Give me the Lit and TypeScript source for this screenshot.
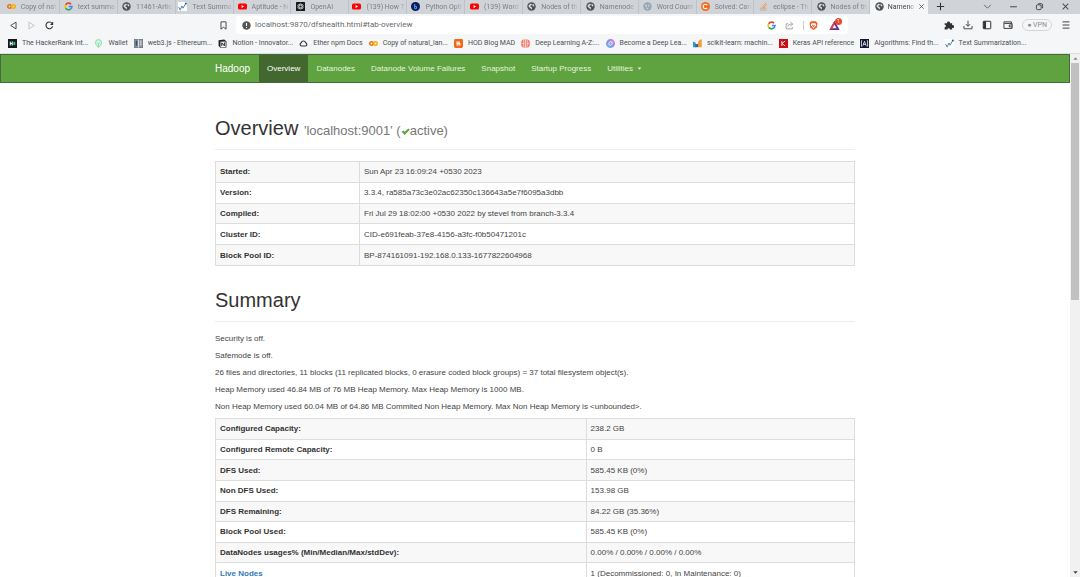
import { LitElement, html, css, svg, nothing, TemplateResult } from "lit";
import { customElement, property } from "lit/decorators.js";

const globe = svg`<circle cx="8" cy="8" r="7.500" fill="#4d5156"/><path d="M2.500 6.500l3.200-3.600 3 .8-.6 2.200-2.200.9.4 1.800 2.400.6.2 2.200-1.600 2.500-1-2.800-2.600-1.600zM10.500 3l2.700 2.600-.6 2.400-2.300-.9-.8-2z" fill="#d9dce0"/>`;
const google = svg`<g fill="none" stroke-width="3"><path d="M12.600 4A6 6 0 0 0 3 5" stroke="#ea4335"/><path d="M3 5a6 6 0 0 0 0 6" stroke="#fbbc05"/><path d="M3 11a6 6 0 0 0 9 1.400" stroke="#34a853"/><path d="M12 12.400A6 6 0 0 0 14 8H8.500" stroke="#4285f4"/></g>`;
const youtube = svg`<rect y="2.500" width="16" height="11" rx="3" fill="#f00"/><path d="M6.300 5.300v5.400L11 8z" fill="#fff"/>`;
const colab = svg`<g fill="none" stroke-width="2.600"><circle cx="4.500" cy="8" r="3.200" stroke="#e8710a"/><circle cx="11.500" cy="8" r="3.200" stroke="#f9ab00"/></g>`;
const chart = svg`<path d="M1 9l3 5 3-7 2 4 5-9" fill="none" stroke="#3c78a8" stroke-width="1.600"/><circle cx="14" cy="2.500" r="1.800" fill="#285f9c"/><circle cx="4" cy="13.500" r="1.500" fill="#64b1a0"/>`;

const icons: Record<string, TemplateResult> = {
  globe, google, youtube, colab, chart,
  chartTile: svg`<rect width="16" height="16" fill="#fff"/>${chart}`,
  openai: svg`<rect width="16" height="16" rx="1" fill="#16181a"/><g fill="none" stroke="#d7d9db" stroke-width="1.100"><ellipse cx="8" cy="8" rx="2.500" ry="5.500"/><ellipse cx="8" cy="8" rx="2.500" ry="5.500" transform="rotate(60 8 8)"/><ellipse cx="8" cy="8" rx="2.500" ry="5.500" transform="rotate(120 8 8)"/></g>`,
  python: svg`<circle cx="8" cy="8" r="8" fill="#0c1c5c"/><path d="M6.500 3.500v8.500M6.500 8a2.200 2.200 0 1 1 0 3.500" fill="none" stroke="#4ba2f0" stroke-width="1.800"/>`,
  faded: svg`<circle cx="8" cy="8" r="7.500" fill="#98a5b8"/><path d="M4 5h3v3H4zM9 4l3 2-2 3zM5 10l5 0-2 3z" fill="#d2d9e4"/>`,
  solved: svg`<circle cx="8" cy="8" r="8" fill="#f26b1d"/><path d="M11 5.500a4 4 0 1 0 0 5" fill="none" stroke="#fff" stroke-width="2.200"/>`,
  stack: svg`<path d="M2.500 10v4.500h10V10" fill="none" stroke="#b5b0ac" stroke-width="1.500"/><path d="M4.500 12h6M4.700 9.300l6 1M6 6.200l5.400 2.700M8.400 3l4.200 4.300M11.500 1l2.200 5" stroke="#f2955a" stroke-width="1.700"/>`,
  hacker: svg`<rect width="16" height="16" fill="#101820"/><path d="M4 4.500v7M7.500 4.500v7M4 8h3.500" stroke="#fff" stroke-width="1.800"/><path d="M9.500 5h3.500v6H9.500z" fill="#2ec866"/>`,
  wallet: svg`<path d="M8 1a5.500 5.500 0 0 1 5.500 5.500C13.500 10 8 15 8 15S2.500 10 2.500 6.500A5.500 5.500 0 0 1 8 1z" fill="#d8f6e3" stroke="#6ed79b" stroke-width="1.400"/><path d="M5.500 6L8 8.500 10.500 6M8 8.500V14" stroke="#6ed79b" fill="none" stroke-width="1.300"/>`,
  web3: svg`<rect x=".5" y=".5" width="15" height="15" fill="#8a949e" stroke="#58636e"/><path d="M8 1v14M10.500 4h3M10.500 7h3M10.500 10h3" stroke="#fff" stroke-width="1.300"/><path d="M3 3h3v9H3z" fill="#38506a"/>`,
  notion: svg`<path d="M1 2l10-1 4 3v11l-11 .5L1 12z" fill="#222"/><path d="M4.500 5l9-.6V14l-9 .5z" fill="#fff"/><path d="M6.700 12.500V6.800l4.600 5.400V6" fill="none" stroke="#111" stroke-width="1.600"/>`,
  ether: svg`<path d="M4.500 12.500a3 3 0 0 1-.5-5.800 4 4 0 0 1 7.800 0 3 3 0 0 1-.3 5.800z" fill="none" stroke="#333" stroke-width="2"/>`,
  blogger: svg`<rect width="16" height="16" rx="2.500" fill="#f06a1d"/><path d="M5 4h3.500a2 2 0 0 1 2 2v.8L12 8v2a2 2 0 0 1-2 2H6a2 2 0 0 1-2-2V5a1 1 0 0 1 1-1zM6 6.700h2.500M6 9.700h4" fill="#fff" stroke="#f06a1d"/>`,
  brain: svg`<rect x=".5" y="1" width="15" height="14" rx="5" fill="#ef7a68"/><path d="M5 2v12M8 1v14M11 2v12M2 8h3M11 8h3" stroke="#fff" stroke-width="1.100"/>`,
  swirl: svg`<circle cx="8" cy="8" r="7.800" fill="#8f8bea"/><path d="M8 .2A7.800 7.800 0 0 1 15.800 8H8z" fill="#d589e4"/><path d="M8 15.800A7.800 7.800 0 0 1 .2 8H8z" fill="#69b6ee"/><circle cx="8" cy="8" r="3" fill="none" stroke="#fff" stroke-width="1.500"/>`,
  scikit: svg`<path d="M0 5c4-1 6 3 6 9.500H0z" fill="#3499cd"/><path d="M9 14.500C7.500 7 10 1 15.500.5v14z" fill="#f89939"/><path d="M4 9h5v5.500H4z" fill="#286a91"/>`,
  keras: svg`<rect width="16" height="16" fill="#c70e14"/><path d="M5 3.500v9M11 3.500L5.500 8l5.500 4.500" fill="none" stroke="#fff" stroke-width="1.500"/>`,
  algo: svg`<rect width="16" height="16" fill="#101632"/><path d="M4 3H2.500v10H4M12 3h1.500v10H12M5 12l3-8 3 8M6 9.500h4" fill="none" stroke="#fff" stroke-width="1.400"/>`,
  back: svg`<path d="M12.500 2v12L3 8z" fill="none" stroke="#444" stroke-width="1.700" stroke-linejoin="round"/>`,
  forward: svg`<path d="M3.500 2v12L13 8z" fill="none" stroke="#bbb" stroke-width="1.500" stroke-linejoin="round"/>`,
  reload: svg`<path d="M13.500 9.500A6 6 0 1 1 12.500 4" fill="none" stroke="#333" stroke-width="2"/><path d="M14.500 1v6H9z" fill="#333"/>`,
  ribbon: svg`<path d="M3.500 1.500h9v13L8 11l-4.500 3.500z" fill="none" stroke="#444" stroke-width="1.700" stroke-linejoin="round"/>`,
  info: svg`<circle cx="8" cy="8" r="7.500" fill="#555"/><path d="M8 3.500v5.500M8 10.500v2" stroke="#fff" stroke-width="2"/>`,
  share: svg`<path d="M6 5H2v9h11v-3.500M5 10c.5-3 3-4.500 7-4.500M9.500 2L14 5.500 9.500 9" fill="none" stroke="#888" stroke-width="1.300"/>`,
  shield: svg`<path d="M4 .5h8l3 3-1 8L8 16l-6-4.500-1-8z" fill="#f15a22"/><path d="M4 4.500l4-1 4 1 .5 3L8 13.500 3.500 7.500z" fill="#fff"/><path d="M5.500 6.500L8 8l2.500-1.500V8L8 11 5.500 8z" fill="#f15a22"/>`,
  rewards: svg`<path d="M8 1L.5 14.500h15z" fill="#662d91"/><path d="M8 1L.5 14.500 8 11z" fill="#e0403c"/><path d="M8 6.500L5 12h6z" fill="#fff"/>`,
  puzzle: svg`<path d="M1 5h4a2.300 2.300 0 1 1 4.500 0H13v3.500a2.300 2.300 0 1 1 0 4V15H9.500a2 2 0 1 0-4 0H1v-3.500a2 2 0 1 0 0-4z" fill="#333"/>`,
  download: svg`<path d="M8 1v9M4.500 6.500L8 10l3.500-3.500M1.500 9.500v4.500h13V9.500" fill="none" stroke="#444" stroke-width="1.500"/>`,
  sidebar: svg`<rect x="2" y="2" width="12" height="12" rx="1" fill="none" stroke="#333" stroke-width="1.600"/><path d="M2 2h4.500v12H2z" fill="#333"/>`,
  purse: svg`<path d="M13.500 5.500V3h-12v10.500h13v-8H2M15 8h-5v3h5" fill="none" stroke="#444" stroke-width="1.600"/>`,
  menu: svg`<path d="M2.500 3h11M2.500 8h11M2.500 13h11" stroke="#444" stroke-width="1.600"/>`,
  close: svg`<path d="M3 3l10 10M13 3L3 13" stroke="currentColor" stroke-width="1.800"/>`,
  plus: svg`<path d="M8 1.500v13M1.500 8h13" stroke="#333" stroke-width="1.900"/>`,
  chevron: svg`<path d="M2 5l6 6 6-6" fill="none" stroke="#555" stroke-width="1.500"/>`,
  minimise: svg`<path d="M2 8.500h12" stroke="#333" stroke-width="1.600"/>`,
  restore: svg`<rect x="2.500" y="5" width="8.500" height="8.500" rx="2" fill="none" stroke="#333" stroke-width="1.500"/><path d="M5.500 3h5.500a2.500 2.500 0 0 1 2.500 2.500V11" fill="none" stroke="#333" stroke-width="1.500"/>`,
  check: svg`<path d="M1 8.500L4 6l2.500 2.500L13 2.500l2.500 2.300L6.500 14z" fill="#5fa341"/>`,
  up: svg`<path d="M3 11l5-6 5 6z" fill="#888"/>`,
  down: svg`<path d="M3 5l5 6 5-6z" fill="#444"/>`,
  caret: svg`<path d="M2 5h12L8 12z" fill="currentColor"/>`,
};

@customElement("ui-icon")
class UiIcon extends LitElement {
  @property() name = "";
  static styles = css`
    :host { display: inline-flex; flex: none; width: 9px; height: 9px; }
    svg { width: 100%; height: 100%; display: block; }
  `;
  render() {
    return html`<svg viewBox="0 0 16 16" aria-hidden="true">${icons[this.name]}</svg>`;
  }
}

const tabs: [string, string][] = [
  ["colab", "Copy of nat"], ["google", "text summa"], ["globe", "11461-Artic"],
  ["chartTile", "Text Summa"], ["youtube", "Aptitude - N"], ["openai", "OpenAI"],
  ["youtube", "(139) How T"], ["python", "Python Opti"], ["youtube", "(139) Word"],
  ["globe", "Nodes of th"], ["globe", "Namenode"], ["faded", "Word Count"],
  ["solved", "Solved: Can"], ["stack", "eclipse - Th"], ["globe", "Nodes of th"],
  ["globe", "Nameno"],
];

const bookmarks: [string, string][] = [
  ["hacker", "The HackerRank Int..."], ["wallet", "Wallet"], ["web3", "web3.js - Ethereum..."],
  ["notion", "Notion - Innovator..."], ["ether", "Ether npm Docs"], ["colab", "Copy of natural_lan..."],
  ["blogger", "HOD Blog MAD"], ["brain", "Deep Learning A-Z:..."], ["swirl", "Become a Deep Lea..."],
  ["scikit", "scikit-learn: machin..."], ["keras", "Keras API reference"],
  ["algo", "Algorithms: Find th..."], ["chartTile", "Text Summarization..."],
];

@customElement("browser-chrome")
class BrowserChrome extends LitElement {
  static styles = css`
    :host { display: block; flex: none; font: 7px/10px Roboto, "Noto Sans", sans-serif; color: #4c4f54; }
    * { box-sizing: border-box; }
    button { display: inline-flex; align-items: center; justify-content: center; padding: 0; border: 0; background: none; font: inherit; color: inherit; }
    .strip { display: flex; align-items: center; height: 14px; padding-left: 2px; background: #d0d4d9; }
    .tabs { display: grid; grid-template-columns: repeat(16, minmax(0, 1fr)); flex: 0 1 926px; min-width: 0; height: 14px; }
    .tab { display: flex; align-items: center; gap: 5px; padding: 0 3px 1px 5px; min-width: 0; color: #7c8086; border-right: 1px solid #bfc3c9; }
    .title { flex: 1; white-space: nowrap; text-align: left; mask-image: linear-gradient(90deg, #000 80%, #0003); }
    .active { background: #f5f6f7; color: #44474c; border: 0; gap: 4px; }
    .active .close { width: 7px; height: 7px; }
    .controls { display: flex; flex: 1; align-items: center; padding: 0 10px 1px 8px; gap: 17px; }
    .controls .spread { margin-left: auto; }
    .toolbar { display: flex; align-items: center; height: 22px; padding: 0 9px; background: #f5f6f7; }
    .nav { display: flex; gap: 9px; width: 210px; }
    .address { display: flex; align-items: center; flex: 1; min-width: 0; height: 18px; margin-left: 8px; padding: 0 8px 0 6px; gap: 4px; background: #fff; border-radius: 3px; }
    .url { flex: 1; min-width: 0; padding: 0; border: 0; outline: 0; font: inherit; font-size: 8px; color: #66696d; background: none; }
    .tail { display: flex; align-items: center; gap: 9px; }
    .shields { display: flex; align-items: center; gap: 5px; }
    .line { width: 1px; height: 9px; background: #ccc; }
    .rewards { position: relative; margin-left: 2px; }
    .rewards ui-icon { width: 11px; height: 11px; }
    .count { position: absolute; top: -2px; right: -2px; width: 7px; height: 7px; border-radius: 4px; background: #e8452c; color: #fff; font-size: 5px; line-height: 7px; }
    .tools { display: flex; align-items: center; justify-content: flex-end; gap: 9px; width: 223px; }
    .tools ui-icon { width: 10px; height: 10px; }
    .vpn { height: 12px; padding: 0 4px; border: 1px solid #d4d6d9; border-radius: 6px; color: #8a8d91; white-space: nowrap; }
    .purse { margin-left: 2px; }
    .marks { display: flex; align-items: center; gap: 6px; height: 17px; padding: 0 8px 3px; background: #f5f6f7; }
    .mark { display: flex; align-items: center; gap: 5px; white-space: nowrap; color: inherit; text-decoration: none; }
    .edge { height: 1px; background: #dcdddf; }
  `;
  render() {
    return html`
      <div class="strip">
        <div class="tabs" role="tablist">
          ${tabs.map(([icon, title], i) => {
            const active = i === tabs.length - 1;
            return html`<button role="tab" aria-selected=${active} class="tab ${active ? "active" : ""}">
              <ui-icon name=${icon}></ui-icon><span class="title">${title}</span>
              ${active ? html`<ui-icon class="close" name="close"></ui-icon>` : nothing}
            </button>`;
          })}
        </div>
        <div class="controls">
          <button aria-label="New tab"><ui-icon name="plus"></ui-icon></button>
          <button class="spread" aria-label="Search tabs"><ui-icon name="chevron"></ui-icon></button>
          <button aria-label="Minimise"><ui-icon name="minimise"></ui-icon></button>
          <button aria-label="Restore"><ui-icon name="restore"></ui-icon></button>
          <button aria-label="Close"><ui-icon name="close"></ui-icon></button>
        </div>
      </div>
      <div class="toolbar">
        <div class="nav">
          <button aria-label="Back"><ui-icon name="back"></ui-icon></button>
          <button aria-label="Forward"><ui-icon name="forward"></ui-icon></button>
          <button aria-label="Reload"><ui-icon name="reload"></ui-icon></button>
        </div>
        <button aria-label="Bookmark"><ui-icon name="ribbon"></ui-icon></button>
        <div class="address">
          <ui-icon name="info"></ui-icon>
          <input class="url" aria-label="Address" value="localhost:9870/dfshealth.html#tab-overview" />
          <div class="tail">
            <ui-icon name="google"></ui-icon>
            <button aria-label="Share"><ui-icon name="share"></ui-icon></button>
            <div class="shields">
              <span class="line"></span>
              <button aria-label="Shields"><ui-icon name="shield"></ui-icon></button>
            </div>
            <button class="rewards" aria-label="Rewards"><ui-icon name="rewards"></ui-icon><span class="count">1</span></button>
          </div>
        </div>
        <div class="tools">
          <button aria-label="Extensions"><ui-icon name="puzzle"></ui-icon></button>
          <button aria-label="Downloads"><ui-icon name="download"></ui-icon></button>
          <button aria-label="Sidebar"><ui-icon name="sidebar"></ui-icon></button>
          <button class="purse" aria-label="Wallet"><ui-icon name="purse"></ui-icon></button>
          <button class="vpn">● VPN</button>
          <button aria-label="Menu"><ui-icon name="menu"></ui-icon></button>
        </div>
      </div>
      <nav class="marks">
        ${bookmarks.map(([icon, label]) => html`<a class="mark" href="#"><ui-icon name=${icon}></ui-icon><span>${label}</span></a>`)}
      </nav>
      <div class="edge"></div>
    `;
  }
}

const overview: [string, string][] = [
  ["Started:", "Sun Apr 23 16:09:24 +0530 2023"],
  ["Version:", "3.3.4, ra585a73c3e02ac62350c136643a5e7f6095a3dbb"],
  ["Compiled:", "Fri Jul 29 18:02:00 +0530 2022 by stevel from branch-3.3.4"],
  ["Cluster ID:", "CID-e691feab-37e8-4156-a3fc-f0b50471201c"],
  ["Block Pool ID:", "BP-874161091-192.168.0.133-1677822604968"],
];

const notes = [
  "Security is off.",
  "Safemode is off.",
  "26 files and directories, 11 blocks (11 replicated blocks, 0 erasure coded block groups) = 37 total filesystem object(s).",
  "Heap Memory used 46.84 MB of 76 MB Heap Memory. Max Heap Memory is 1000 MB.",
  "Non Heap Memory used 60.04 MB of 64.86 MB Commited Non Heap Memory. Max Non Heap Memory is <unbounded>.",
];

const summary: [string, string, boolean?][] = [
  ["Configured Capacity:", "238.2 GB"],
  ["Configured Remote Capacity:", "0 B"],
  ["DFS Used:", "585.45 KB (0%)"],
  ["Non DFS Used:", "153.98 GB"],
  ["DFS Remaining:", "84.22 GB (35.36%)"],
  ["Block Pool Used:", "585.45 KB (0%)"],
  ["DataNodes usages% (Min/Median/Max/stdDev):", "0.00% / 0.00% / 0.00% / 0.00%"],
  ["Live Nodes", "1 (Decommissioned: 0, In Maintenance: 0)", true],
];

@customElement("app-root")
class AppRoot extends LitElement {
  static styles = css`
    :host { display: flex; flex-direction: column; height: 100vh; overflow: hidden; background: #fff; color: #444; font: 8px/11px "Liberation Sans", Arial, sans-serif; }
    * { box-sizing: border-box; }
    .view { display: flex; flex: 1; min-height: 0; }
    .page { flex: 1; min-width: 0; overflow: hidden; }
    .navbar { height: 29px; background: #5fa341; border: 1px solid #456b3c; }
    .inner { max-width: 640px; margin: 0 auto; }
    .bar { display: flex; height: 27px; }
    .bar a { display: flex; align-items: center; gap: 4px; padding: 0 8px; color: #e6f2df; text-decoration: none; white-space: nowrap; }
    .bar .brand { padding: 0 9px 0 0; font-size: 10px; color: #fff; }
    .bar .current { background: #42682f; color: #fff; }
    .bar ui-icon { width: 5px; height: 5px; }
    .head { margin: 23px 0 11px; padding-bottom: 10px; border-bottom: 1px solid #eee; }
    .first { margin-top: 34px; }
    h1 { margin: 0; font-size: 20px; line-height: 22px; font-weight: 400; color: #333; }
    small { font-size: 13px; line-height: 13px; color: #777; }
    small ui-icon { vertical-align: -1px; }
    p { margin: 0 0 6px; }
    table { width: 100%; table-layout: fixed; border-collapse: collapse; }
    .facts { height: 105px; }
    .facts th { width: 144px; }
    .totals { height: 166px; }
    .totals th { width: 58%; }
    th, td { padding: 4px; border: 1px solid #ddd; text-align: left; }
    th { color: #333; }
    tr:nth-child(odd) { background: #f8f8f8; }
    th a { color: #337ab7; text-decoration: none; }
    .scroll { display: flex; flex-direction: column; align-items: center; width: 10px; background: #f1f1f1; }
    .scroll button { display: flex; justify-content: center; align-items: center; padding: 0; border: 0; width: 10px; height: 9px; background: none; }
    .scroll ui-icon { width: 7px; height: 7px; }
    .track { flex: 1; width: 8px; }
    .thumb { height: 47%; background: #c1c1c1; }
  `;
  table(cls: string, rows: [string, string, boolean?][]) {
    return html`<table class=${cls}><tbody>
      ${rows.map(([k, v, link]) => html`<tr><th scope="row">${link ? html`<a href="#">${k}</a>` : k}</th><td>${v}</td></tr>`)}
    </tbody></table>`;
  }
  render() {
    return html`
      <browser-chrome></browser-chrome>
      <div class="view">
        <div class="page">
          <header class="navbar">
            <nav class="inner bar">
              <a class="brand" href="#">Hadoop</a>
              <a class="current" href="#">Overview</a>
              <a href="#">Datanodes</a>
              <a href="#">Datanode Volume Failures</a>
              <a href="#">Snapshot</a>
              <a href="#">Startup Progress</a>
              <a href="#">Utilities <ui-icon name="caret"></ui-icon></a>
            </nav>
          </header>
          <main class="inner">
            <div class="head first">
              <h1>Overview <small>'localhost:9001' (<ui-icon name="check"></ui-icon>active)</small></h1>
            </div>
            ${this.table("facts", overview)}
            <div class="head"><h1>Summary</h1></div>
            ${notes.map((n) => html`<p>${n}</p>`)}
            ${this.table("totals", summary)}
          </main>
        </div>
        <div class="scroll">
          <button aria-label="Scroll up"><ui-icon name="up"></ui-icon></button>
          <div class="track"><div class="thumb"></div></div>
          <button aria-label="Scroll down"><ui-icon name="down"></ui-icon></button>
        </div>
      </div>
    `;
  }
}
